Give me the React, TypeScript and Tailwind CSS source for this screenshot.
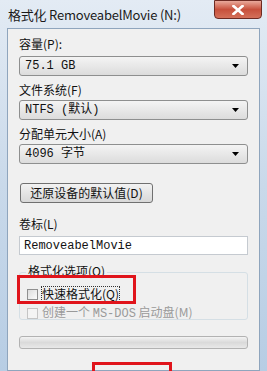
import React from "react";

const cjk = { fontFamily: '"Noto Sans CJK SC", "Liberation Sans", sans-serif' };
const mono = { fontFamily: '"Liberation Mono", "Noto Sans CJK SC", monospace' };

function Combo({ text }: { text: string }) {
  return (
    <div className="h-[20px] flex items-center justify-between rounded-[3px] border border-[#8e8f8f] bg-gradient-to-b from-[#f4f4f4] to-[#dcdcdc] pl-[5px] pr-[8px]">
      <span className="text-[12px] leading-none text-[#111]" style={mono}>{text}</span>
      <svg width="7" height="4" viewBox="0 0 7 4"><path d="M0 0 H7 L3.5 4 Z" fill="#000" /></svg>
    </div>
  );
}

export default function App() {
  return (
    <div className="w-[267px] h-[371px] overflow-hidden relative bg-gradient-to-b from-[#e3ebf4] via-[#c9d9ea] to-[#b7cde4]" style={cjk}>
      {/* title bar */}
      <div className="h-[28px] flex items-center pl-[8px] pt-[1px]">
        <span className="text-[13px] text-[#1a1a1a] tracking-[-0.2px]" style={{ fontFamily: '"Noto Sans CJK SC", sans-serif' }}>格式化 RemoveabelMovie (N:)</span>
      </div>
      <div className="absolute left-[214px] top-0 w-[48px] h-[19px] rounded-b-[4px] border border-[#6d2a22] bg-gradient-to-b from-[#e9a99b] via-[#c7503c] to-[#d4705a] flex items-center justify-center">
        <svg width="12" height="10" viewBox="0 0 12 10">
          <path d="M1.5 1 L10.5 9 M10.5 1 L1.5 9" stroke="#fff" strokeWidth="2.6" strokeLinecap="square" />
        </svg>
      </div>
      {/* client */}
      <div className="mx-[7px] h-[343px] border border-[#8fa5bd] bg-[#f0f0f0] px-[11px] flex flex-col">
        <div className="mt-[8px] h-[14px] text-[12px] leading-[14px] text-[#111]">容量(P):</div>
        <div className="mt-[5px]"><Combo text="75.1 GB" /></div>
        <div className="mt-[7px] h-[14px] text-[12px] leading-[14px] text-[#111]">文件系统(F)</div>
        <div className="mt-[3px]"><Combo text="NTFS (默认)" /></div>
        <div className="mt-[7px] h-[14px] text-[12px] leading-[14px] text-[#111]">分配单元大小(A)</div>
        <div className="mt-[3px]"><Combo text="4096 字节" /></div>
        <div className="mt-[19px] ml-[1px] w-[133px] h-[20px] rounded-[3px] border border-[#707070] bg-gradient-to-b from-[#f2f2f2] to-[#d8d8d8] flex items-center justify-center text-[12px] text-[#111]">
          还原设备的默认值(D)
        </div>
        <div className="mt-[14px] h-[14px] text-[12px] leading-[14px] text-[#111]">卷标(L)</div>
        <div className="mt-[5px] h-[19px] border border-[#c5cad0] bg-white flex items-center pl-[4px] text-[12px] text-[#111]" style={mono}>
          RemoveabelMovie
        </div>
        {/* group box */}
        <div className="relative mt-[17px] h-[48px] rounded-[3px] border border-[#d5dfe5]">
          <div className="absolute left-[6px] top-[-9px] bg-[#f0f0f0] px-[2px] h-[14px] text-[12px] leading-[14px] text-[#111]">格式化选项(O)</div>
          <div className="absolute left-[7px] top-[14px] flex items-center gap-[4px]">
            <div className="w-[11px] h-[11px] border border-[#8f8f8f] bg-gradient-to-br from-[#dcdcdc] to-[#fbfbfb]" />
            <span className="text-[12px] leading-[14px] text-[#111] outline outline-1 outline-dotted outline-[#333]">快速格式化(Q)</span>
          </div>
          <div className="absolute left-[7px] top-[32px] flex items-center gap-[4px]">
            <div className="w-[11px] h-[11px] border border-[#c5c5c5] bg-[#f4f4f4]" />
            <span className="text-[12px] leading-[14px] text-[#9a9a9a]">创建一个 <span style={mono}>MS-DOS</span> 启动盘(M)</span>
          </div>
        </div>
        <div className="mt-[16px] h-[13px] rounded-[3px] border border-[#b2b2b2] bg-gradient-to-b from-[#f3f3f3] via-[#dadada] to-[#e8e8e8]" />
      </div>
      {/* red highlights */}
      <div className="absolute left-[17px] top-[275px] w-[119px] h-[29px] border-[3px] border-[#e0141b]" />
      <div className="absolute left-[92px] top-[362px] w-[80px] h-[20px] border-[3px] border-[#e0141b]" />
    </div>
  );
}
